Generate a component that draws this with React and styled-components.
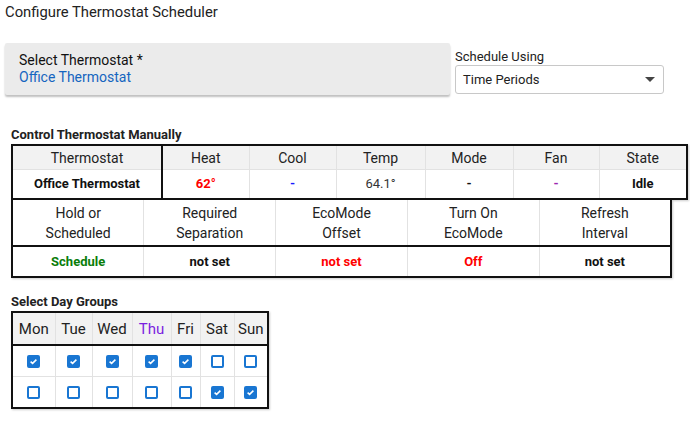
import React from 'react';
import styled, { createGlobalStyle } from 'styled-components';

const GlobalStyle = createGlobalStyle`
  body {
    margin: 0;
    background: #fff;
    font-family: Roboto, 'Liberation Sans', sans-serif;
    color: #222;
  }
`;

const Page = styled.div`
  width: 690px;
  height: 422px;
  padding: 0 0 0 5px;
  box-sizing: border-box;
  overflow: hidden;
`;

const Title = styled.h1`
  margin: 0;
  padding-top: 2px;
  font-size: 14.8px;
  font-weight: 400;
  line-height: 20px;
  color: #222;
`;

const TopRow = styled.div`
  display: flex;
  align-items: flex-start;
  gap: 5px;
  margin-top: 21px;
`;

const PickerCard = styled.div`
  width: 445px;
  height: 52px;
  box-sizing: border-box;
  padding: 9px 14px;
  background: #ebebeb;
  border-radius: 2px;
  box-shadow: 0 2px 2px rgba(0, 0, 0, 0.25);
`;

const PickerLabel = styled.div`
  font-size: 14px;
  line-height: 17px;
  color: #111;
`;

const PickerValue = styled.div`
  font-size: 14px;
  line-height: 17px;
  color: #1565c0;
`;

const SelectWrap = styled.div`
  display: flex;
  flex-direction: column;
  margin-top: 5px;
`;

const SelectLabel = styled.label`
  font-size: 13px;
  line-height: 17px;
  color: #222;
`;

const SelectBox = styled.div`
  width: 209px;
  height: 29px;
  box-sizing: border-box;
  border: 1px solid #c8c8c8;
  border-radius: 3px;
  display: flex;
  align-items: center;
  justify-content: space-between;
  padding: 0 8px 0 7px;
  font-size: 13px;
  color: #222;
`;

const Caret = styled.span`
  width: 0;
  height: 0;
  border-left: 5px solid transparent;
  border-right: 5px solid transparent;
  border-top: 5px solid #444;
`;

const SectionLabel = styled.div`
  margin: ${p => p.$top}px 0 2px 6px;
  font-size: 13px;
  font-weight: 700;
  line-height: 15px;
  color: #222;
`;

const Grid = styled.table`
  margin-left: 6px;
  width: ${p => p.$w}px;
  table-layout: fixed;
  border-collapse: collapse;
  border: 2px solid #111;
  box-shadow: 1px 1px 2px rgba(0, 0, 0, 0.2);
`;

const Col = styled.col`
  width: ${p => p.$w}px;
`;

const Head = styled.th`
  height: ${p => p.$h}px;
  padding: 0;
  font-size: ${p => p.$fs || 14}px;
  font-weight: 400;
  line-height: 20px;
  color: ${p => p.$color || '#222'};
  background: ${p => (p.$plain ? '#fff' : '#f2f2f2')};
  border-left: ${p => (p.$strong ? '2px solid #111' : '1px solid #e2e2e2')};
  border-bottom: ${p => (p.$heavy ? '2px solid #111' : '1px solid #e2e2e2')};
  text-align: center;
`;

const Cell = styled.td`
  height: ${p => p.$h}px;
  padding: 0;
  font-size: 13px;
  line-height: 16px;
  font-weight: ${p => (p.$light ? 400 : 700)};
  color: ${p => p.$color || '#111'};
  border-left: ${p => (p.$strong ? '2px solid #111' : '1px solid #e2e2e2')};
  border-top: 1px solid #e2e2e2;
  text-align: center;
  vertical-align: middle;
`;

const Box = styled.span`
  display: inline-block;
  vertical-align: middle;
  width: 13px;
  height: 13px;
  box-sizing: border-box;
  border-radius: 2px;
  border: 2px solid #1976d2;
  background: ${p => (p.$on ? '#1976d2' : '#fff')};
  position: relative;
`;

const Check = ({ on }) => (
  <Box $on={on}>
    {on && (
      <svg width="9" height="9" viewBox="0 0 9 9" style={{ position: 'absolute', left: 0, top: 0 }}>
        <path d="M1.6 4.6 L3.6 6.4 L7.4 2.6" stroke="#fff" strokeWidth="1.5" fill="none" />
      </svg>
    )}
  </Box>
);

const t1 = [
  { h: 'Thermostat', w: 150, v: 'Office Thermostat' },
  { h: 'Heat', w: 87, v: '62°', c: '#f00', strong: true },
  { h: 'Cool', w: 87, v: '-', c: '#1a1aff' },
  { h: 'Temp', w: 89, v: '64.1°', light: true, c: '#333' },
  { h: 'Mode', w: 88, v: '-' },
  { h: 'Fan', w: 86, v: '-', c: '#9c27b0' },
  { h: 'State', w: 88, v: 'Idle' },
];

const t2 = [
  { h: ['Hold or', 'Scheduled'], v: 'Schedule', c: '#0a7d0a' },
  { h: ['Required', 'Separation'], v: 'not set' },
  { h: ['EcoMode', 'Offset'], v: 'not set', c: '#f00' },
  { h: ['Turn On', 'EcoMode'], v: 'Off', c: '#f00' },
  { h: ['Refresh', 'Interval'], v: 'not set' },
];

const days = [
  { d: 'Mon', w: 43, a: true, b: false },
  { d: 'Tue', w: 37, a: true, b: false },
  { d: 'Wed', w: 40, a: true, b: false },
  { d: 'Thu', w: 39, a: true, b: false, c: '#7b1fe0' },
  { d: 'Fri', w: 29, a: true, b: false },
  { d: 'Sat', w: 34, a: false, b: true },
  { d: 'Sun', w: 34, a: false, b: true },
];

export default function App() {
  return (
    <Page>
      <GlobalStyle />
      <Title>Configure Thermostat Scheduler</Title>
      <TopRow>
        <PickerCard>
          <PickerLabel>Select Thermostat *</PickerLabel>
          <PickerValue>Office Thermostat</PickerValue>
        </PickerCard>
        <SelectWrap>
          <SelectLabel>Schedule Using</SelectLabel>
          <SelectBox>
            <span>Time Periods</span>
            <Caret />
          </SelectBox>
        </SelectWrap>
      </TopRow>

      <SectionLabel $top={32}>Control Thermostat Manually</SectionLabel>
      <Grid $w={676}>
        <colgroup>
          {t1.map(c => <Col key={c.h} $w={c.w} />)}
        </colgroup>
        <thead>
          <tr>
            {t1.map(c => (
              <Head key={c.h} $h={23} $strong={c.strong}>{c.h}</Head>
            ))}
          </tr>
        </thead>
        <tbody>
          <tr>
            {t1.map(c => (
              <Cell key={c.h} $h={28} $strong={c.strong} $color={c.c} $light={c.light}>{c.v}</Cell>
            ))}
          </tr>
        </tbody>
      </Grid>
      <Grid $w={661} style={{ borderTop: 'none' }}>
        <thead>
          <tr>
            {t2.map(c => (
              <Head key={c.h[0]} $h={45} $plain $heavy>
                {c.h[0]}<br />{c.h[1]}
              </Head>
            ))}
          </tr>
        </thead>
        <tbody>
          <tr>
            {t2.map(c => (
              <Cell key={c.h[0]} $h={29} $color={c.c}>{c.v}</Cell>
            ))}
          </tr>
        </tbody>
      </Grid>

      <SectionLabel $top={16}>Select Day Groups</SectionLabel>
      <Grid $w={256}>
        <colgroup>
          {days.map(d => <Col key={d.d} $w={d.w} />)}
        </colgroup>
        <thead>
          <tr>
            {days.map(d => (
              <Head key={d.d} $h={31} $fs={15} $heavy $color={d.c}>{d.d}</Head>
            ))}
          </tr>
        </thead>
        <tbody>
          <tr>
            {days.map(d => (
              <Cell key={d.d} $h={30}><Check on={d.a} /></Cell>
            ))}
          </tr>
          <tr>
            {days.map(d => (
              <Cell key={d.d} $h={30}><Check on={d.b} /></Cell>
            ))}
          </tr>
        </tbody>
      </Grid>
    </Page>
  );
}
